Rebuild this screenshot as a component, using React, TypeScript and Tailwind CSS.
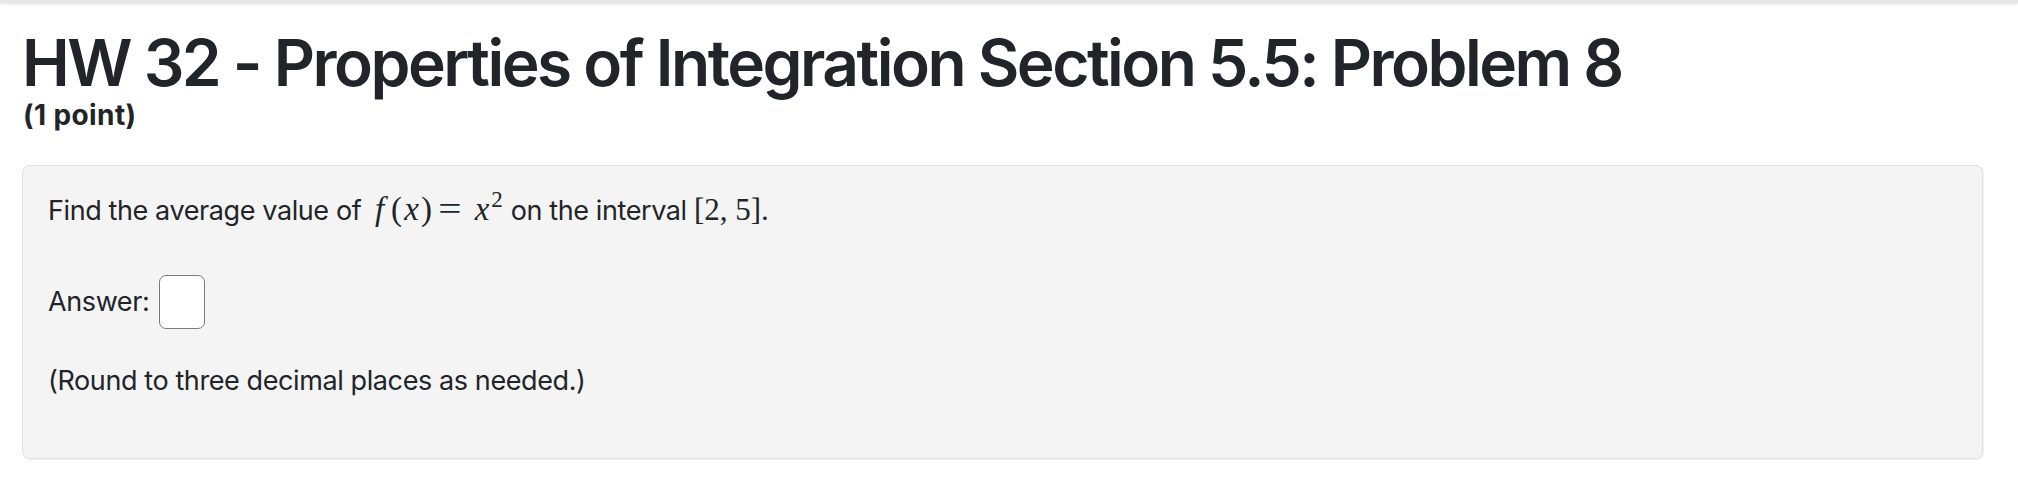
import React from 'react';

const sans = { fontFamily: 'Inter, "Liberation Sans", sans-serif' };
const serif = { fontFamily: '"Liberation Serif", "DejaVu Serif", serif' };

// one glyph of the formula, in a fixed-width slot
function G({ children, w, italic = false, className = '' }: { children: React.ReactNode; w: string; italic?: boolean; className?: string }) {
    return (
        <span className={`inline-block text-center ${w} ${italic ? 'italic' : ''} ${className}`} style={serif}>
            {children}
        </span>
    );
}

export default function App() {
    return (
        <div className="w-[2018px] h-[492px] bg-white text-[#212529] overflow-hidden" style={sans}>
            {/* navbar shadow above */}
            <div className="h-[3px] bg-[#e6e6e6] shadow-[0_1px_3px_rgba(0,0,0,0.12)]" />

            <div className="pl-[22px] pr-[35px]">
                <h1 className="mt-[24px] text-[64px] leading-[72px] font-semibold tracking-[-2.5px]">
                    HW 32 - Properties of Integration Section 5.5: Problem 8
                </h1>
                <div className="text-[28px] leading-[32px] font-bold tracking-[0.4px] pl-[1px]">(1 point)</div>

                <div className="mt-[34px] h-[294px] bg-[#f4f4f4] border border-[#e1e1e1] rounded-[7px] shadow-[1px_1px_1px_rgba(0,0,0,0.06)] pl-[25px] pt-[25px] text-[27px] tracking-[-0.4px]">
                    <p className="leading-[40px] whitespace-nowrap">
                        Find the average value of{' '}
                        <span className="text-[33px] leading-none tracking-normal">
                            <G w="w-[22px]" italic>f</G>
                            <G w="w-[12px]">(</G>
                            <G w="w-[18px]" italic>x</G>
                            <G w="w-[12px]">)</G>
                            <G w="w-[24px]" className="ml-[5px] mr-[12px] scale-x-125">=</G>
                            <G w="w-[17px]" italic>x</G>
                            <G w="w-[13px]" className="text-[23px] relative top-[-13px]">2</G>
                        </span>{' '}
                        on the interval{' '}
                        <span className="text-[31px] leading-none tracking-normal">
                            <span style={serif}>[2, 5]</span>
                        </span>
                        .
                    </p>

                    <div className="mt-[44px] flex items-center">
                        <span className="leading-[40px]">Answer:</span>
                        <span className="ml-[10px] w-[46px] h-[54px] bg-white border-[1.5px] border-[#7a7a7a] rounded-[7px]" />
                    </div>

                    <p className="mt-[32px] leading-[40px]">(Round to three decimal places as needed.)</p>
                </div>
            </div>
        </div>
    );
}
